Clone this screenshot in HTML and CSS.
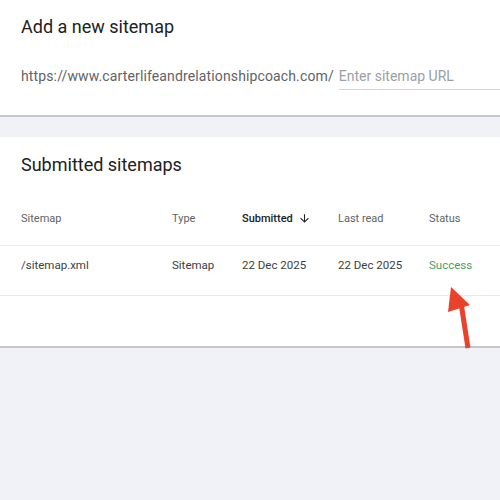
FILE: index.html
```html
<!DOCTYPE html>
<html>
<head>
<meta charset="utf-8">
<link rel="stylesheet" href="styles.css">
</head>
<body>
<section class="card card-add">
  <h2 class="card-title">Add a new sitemap</h2>
  <div class="url-row">
    <span class="url-prefix">https://www.carterlifeandrelationshipcoach.com/</span>
    <input class="url-input" type="text" placeholder="Enter sitemap URL">
  </div>
</section>
<section class="card card-list">
  <h2 class="card-title">Submitted sitemaps</h2>
  <div class="table">
    <div class="row head">
      <div class="cell">Sitemap</div>
      <div class="cell">Type</div>
      <div class="cell sorted">Submitted
        <svg class="sort-icon" viewBox="0 0 24 24" width="13" height="13"><path d="M20 12l-1.41-1.41L13 16.17V4h-2v12.17l-5.58-5.59L4 12l8 8 8-8z" fill="#202124"/></svg>
      </div>
      <div class="cell">Last read</div>
      <div class="cell">Status</div>
    </div>
    <div class="row data">
      <div class="cell">/sitemap.xml</div>
      <div class="cell">Sitemap</div>
      <div class="cell">22 Dec 2025</div>
      <div class="cell">22 Dec 2025</div>
      <div class="cell success">Success</div>
    </div>
  </div>
</section>
<svg class="annotation" width="500" height="500" viewBox="0 0 500 500">
  <line x1="461" y1="303" x2="468" y2="348" stroke="#e8412c" stroke-width="5"/>
  <polygon points="451,287 448,312 470,305" fill="#e8412c"/>
</svg>
</body>
</html>
```
FILE: styles.css
```css
html, body {
  margin: 0;
  padding: 0;
}
body {
  width: 500px;
  height: 500px;
  overflow: hidden;
  background: #f0f2f7;
  font-family: Roboto, "Liberation Sans", Arial, sans-serif;
  position: relative;
}
.card {
  background: #fff;
  border-bottom: 2px solid #c6c7ca;
  box-sizing: border-box;
}
.card-add {
  height: 117px;
  padding: 15px 0 0 21px;
}
.card-list {
  margin-top: 20px;
  height: 211px;
  padding-top: 16px;
}
.card-title {
  margin: 0;
  font-size: 18px;
  font-weight: 400;
  line-height: 24px;
  color: #202124;
}
.card-list .card-title {
  padding-left: 21px;
}
.url-row {
  margin-top: 26px;
  display: flex;
  align-items: baseline;
  gap: 5px;
}
.url-prefix {
  font-size: 14px;
  line-height: 22px;
  letter-spacing: 0.13px;
  color: #5f6368;
  white-space: nowrap;
}
.url-input {
  flex: 1;
  min-width: 0;
  border: none;
  border-bottom: 1px solid #d2d3d6;
  height: 22px;
  padding: 0 0 2px 0;
  font-family: inherit;
  font-size: 14px;
  color: #202124;
  outline: none;
  background: transparent;
}
.url-input::placeholder {
  color: #9aa0a6;
}
.table {
  margin-top: 15px;
}
.row {
  display: grid;
  grid-template-columns: 151px 70px 96px 91px 1fr;
  padding-left: 21px;
  border-bottom: 1px solid #e8eaed;
}
.row.head {
  height: 53px;
  align-items: center;
  font-size: 11px;
  color: #5f6368;
}
.row.data {
  height: 50px;
  box-sizing: border-box;
  padding-top: 11px;
  align-items: start;
  font-size: 11.5px;
  color: #3c4043;
}
.cell {
  line-height: 16px;
  white-space: nowrap;
}
.sorted {
  color: #202124;
  font-weight: 500;
  display: flex;
  align-items: center;
  gap: 5px;
}
.success {
  color: #46a066;
}
.annotation {
  position: absolute;
  left: 0;
  top: 0;
  pointer-events: none;
}
```
